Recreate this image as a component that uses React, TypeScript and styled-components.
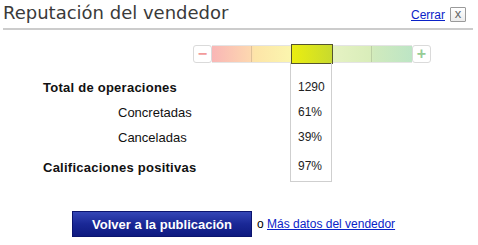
import { FC, Fragment } from 'react';
import styled, { createGlobalStyle } from 'styled-components';

const GlobalStyle = createGlobalStyle`
  body {
    margin: 0;
    background: #fff;
    font-family: 'Liberation Sans', Arial, sans-serif;
  }
`;

interface ISLabel {
  $bold?: boolean;
  $indent?: boolean;
  $last?: boolean;
}
interface ISValue {
  $last?: boolean;
}

const SPage = styled.div`
  width: 478px;
`;
const SHeader = styled.div`
  display: flex;
  justify-content: space-between;
  align-items: flex-start;
  height: 28px;
  margin: 0 5px 0 3px;
  border-bottom: 2px solid #cccccc;
`;
const STitle = styled.h1`
  margin: 0;
  padding-top: 2px;
  font-family: 'DejaVu Sans', Verdana, sans-serif;
  font-size: 18px;
  font-weight: normal;
  line-height: 22px;
  color: #3a3a3a;
`;
const SActions = styled.div`
  display: flex;
  align-items: center;
  gap: 5px;
  margin-top: 7px;
  padding-right: 7px;
`;
const SLink = styled.a`
  font-size: 12px;
  color: #0a22c8;
  text-decoration: underline;
  cursor: pointer;
`;
const SCloseBox = styled.button`
  width: 16px;
  height: 15px;
  padding: 0 0 2px;
  border: 1px solid #9a9a9a;
  border-radius: 1px;
  background: linear-gradient(#ffffff, #ececec);
  color: #666;
  font-family: 'Liberation Sans', Arial, sans-serif;
  font-size: 13px;
  line-height: 11px;
  cursor: pointer;
`;
const SMeter = styled.div`
  display: flex;
  margin-top: 15px;
  padding-left: 193px;
  height: 18px;
`;
const SStepBox = styled.div`
  display: flex;
  align-items: center;
  justify-content: center;
  width: 19px;
  height: 18px;
  box-sizing: border-box;
  border: 1px solid #dadada;
  border-radius: 3px;
  background: #fff;
  font-size: 16px;
  font-weight: bold;
  line-height: 16px;
  color: ${({ color }) => color};
`;
const STrack = styled.div`
  display: flex;
  height: 18px;
  box-sizing: border-box;
  border-top: 1px solid #e4e4e4;
  border-bottom: 1px solid #e4e4e4;
  background: linear-gradient(
    to right,
    #f9b6b6 0%,
    #fdd7b0 19%,
    #fde4a8 21%,
    #fbf6ae 40%,
    #e6f2c3 60%,
    #d9edba 79%,
    #d0eabd 81%,
    #bde5c5 100%
  );
`;
const SSegment = styled.div`
  width: 40px;
  box-sizing: border-box;
  border-right: 1px solid rgba(0, 0, 0, 0.12);

  &:last-child {
    border-right: none;
  }
`;
const SSegmentActive = styled.div`
  width: 42px;
  height: 20px;
  margin: -2px -1px 0 -1px;
  box-sizing: border-box;
  border: 1px solid #55552f;
  background: linear-gradient(to right, #ebee10, #c8da2e);
`;
const STable = styled.div`
  display: grid;
  grid-template-columns: 290px 42px;
  grid-template-rows: 37px 25px 25px 32px;
`;
const SLabel = styled.div<ISLabel>`
  display: flex;
  align-items: flex-end;
  padding-left: ${({ $indent }) => ($indent ? '118px' : '43px')};
  padding-bottom: ${({ $last }) => ($last ? '2px' : '0')};
  font-size: 13px;
  line-height: 25px;
  font-weight: ${({ $bold }) => ($bold ? 'bold' : 'normal')};
  letter-spacing: ${({ $bold }) => ($bold ? '0.25px' : '0')};
  color: #111;
`;
const SValue = styled.div<ISValue>`
  display: flex;
  align-items: flex-end;
  box-sizing: border-box;
  padding-left: 7px;
  padding-bottom: ${({ $last }) => ($last ? '2px' : '0')};
  border-left: 1px solid #cfcfcf;
  border-right: 1px solid #cfcfcf;
  border-bottom: ${({ $last }) => ($last ? '1px solid #cfcfcf' : 'none')};
  font-size: 12px;
  line-height: 25px;
  color: #222;
`;
const SFooter = styled.div`
  display: flex;
  align-items: center;
  margin-top: 29px;
  padding-left: 72px;
  font-size: 12px;
`;
const SButton = styled.button`
  width: 180px;
  height: 26px;
  margin-right: 5px;
  border: 1px solid #0b146e;
  background: linear-gradient(#3446b6, #1a2896 50%, #0f1a80);
  color: #fff;
  font-family: 'Liberation Sans', Arial, sans-serif;
  font-size: 13px;
  font-weight: bold;
  cursor: pointer;
`;

const rows = [
  { label: 'Total de operaciones', value: '1290', bold: true },
  { label: 'Concretadas', value: '61%', indent: true },
  { label: 'Canceladas', value: '39%', indent: true },
  { label: 'Calificaciones positivas', value: '97%', bold: true, last: true },
];

const App: FC = () => {
  return (
    <SPage>
      <GlobalStyle />
      <SHeader>
        <STitle>Reputación del vendedor</STitle>
        <SActions>
          <SLink>Cerrar</SLink>
          <SCloseBox>x</SCloseBox>
        </SActions>
      </SHeader>
      <SMeter>
        <SStepBox color="#f29a9a">−</SStepBox>
        <STrack>
          <SSegment />
          <SSegment />
          <SSegmentActive />
          <SSegment />
          <SSegment />
        </STrack>
        <SStepBox color="#96cc96">+</SStepBox>
      </SMeter>
      <STable>
        {rows.map((row) => (
          <Fragment key={row.label}>
            <SLabel $bold={row.bold} $indent={row.indent} $last={row.last}>
              {row.label}
            </SLabel>
            <SValue $last={row.last}>{row.value}</SValue>
          </Fragment>
        ))}
      </STable>
      <SFooter>
        <SButton>Volver a la publicación</SButton>
        o&nbsp;<SLink>Más datos del vendedor</SLink>
      </SFooter>
    </SPage>
  );
};

export default App;
